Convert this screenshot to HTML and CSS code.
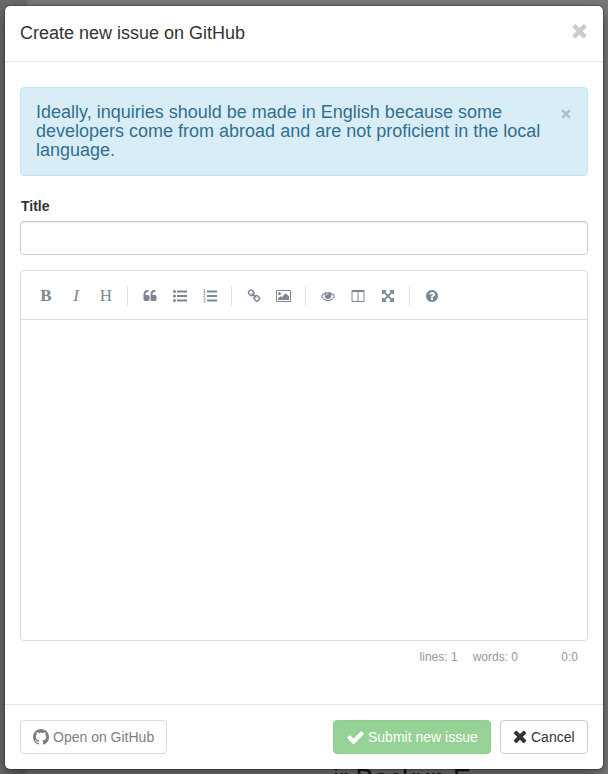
FILE: index.html
```
<!DOCTYPE html>
<html lang="en">
<head>
<meta charset="utf-8">
<title>Create new issue on GitHub</title>
<link rel="stylesheet" href="styles.css">
</head>
<body>
<svg class="defs" width="0" height="0">
<symbol id="times" viewBox="0 0 1792 1792"><path d="M1490 1322q0 40-28 68l-136 136q-28 28-68 28t-68-28l-294-294-294 294q-28 28-68 28t-68-28l-136-136q-28-28-28-68t28-68l294-294-294-294q-28-28-28-68t28-68l136-136q28-28 68-28t68 28l294 294 294-294q28-28 68-28t68 28l136 136q28 28 28 68t-28 68l-294 294 294 294q28 28 28 68z"/></symbol>
</svg>
<div class="backdrop"><span class="backdrop-text">ir Backup E</span></div>
<main class="modal">
<header class="modal-header">
<h1>Create new issue on GitHub</h1>
<button class="close" aria-label="Close"><svg><use href="#times"/></svg></button>
</header>
<section class="modal-body">
<div class="alert">
<p>Ideally, inquiries should be made in English because some developers come from abroad and are not proficient in the local language.</p>
<button class="dismiss" aria-label="Dismiss"><svg viewBox="0 0 10 10"><path d="M1.100 1.100l7.800 7.800M8.900 1.100L1.100 8.900"/></svg></button>
</div>
<label for="title">Title</label>
<input id="title" type="text">
<div class="editor">
<div class="toolbar">
<span class="tool letter bold">B</span><span class="tool letter italic">I</span><span class="tool letter">H</span>
<i class="separator"></i>
<span class="tool"><svg viewBox="0 0 1792 1792"><path d="M832 960v384q0 80-56 136t-136 56h-384q-80 0-136-56t-56-136v-704q0-104 40.5-198.5t109.5-163.5 163.5-109.5 198.5-40.5h64q26 0 45 19t19 45v128q0 26-19 45t-45 19h-64q-106 0-181 75t-75 181v32q0 40 28 68t68 28h224q80 0 136 56t56 136zm896 0v384q0 80-56 136t-136 56h-384q-80 0-136-56t-56-136v-704q0-104 40.5-198.5t109.5-163.5 163.5-109.5 198.5-40.5h64q26 0 45 19t19 45v128q0 26-19 45t-45 19h-64q-106 0-181 75t-75 181v32q0 40 28 68t68 28h224q80 0 136 56t56 136z"/></svg></span>
<span class="tool"><svg viewBox="0 0 14 14"><circle cx="1.5" cy="2.5" r="1.5"/><circle cx="1.5" cy="7" r="1.5"/><circle cx="1.5" cy="11.5" r="1.5"/><path d="M4 1.5h10v2H4zM4 6h10v2H4zM4 10.500h10v2H4z"/></svg></span>
<span class="tool"><svg viewBox="0 0 14 14"><path d="M4 1.500h10v2H4zM4 6h10v2H4zM4 10.500h10v2H4z"/><path class="line" d="M.5 1L1.500.5V3.500M.4 3.600H2.600M.4 5.500Q2.400 4.500 2.200 6L.5 8.100H2.700M.4 10H2.400L1.400 11.500Q3 11.800 2.200 13Q1.300 13.900.3 13.200"/></svg></span>
<i class="separator"></i>
<span class="tool"><svg viewBox="0 0 1792 1792"><path d="M1520 1216q0-40-28-68l-208-208q-28-28-68-28-42 0-72 32 3 3 19 18.500t21.500 21.500 15 19 13 25.500 3.500 27.500q0 40-28 68t-68 28q-15 0-27.500-3.500t-25.500-13-19-15-21.500-21.500-18.500-19q-33 31-33 73 0 40 28 68l206 207q27 27 68 27 40 0 68-26l147-146q28-28 28-67zm-703-705q0-40-28-68l-206-207q-28-28-68-28-39 0-68 27l-147 146q-28 28-28 67 0 40 28 68l208 208q27 27 68 27 42 0 72-31-3-3-19-18.500t-21.500-21.500-15-19-13-25.500-3.500-27.500q0-40 28-68t68-28q15 0 27.500 3.500t25.500 13 19 15 21.500 21.500 18.500 19q33-31 33-73zm895 705q0 120-85 203l-147 146q-83 83-203 83-121 0-204-85l-206-207q-83-83-83-203 0-123 88-209l-88-88q-86 88-208 88-120 0-204-84l-208-208q-84-84-84-204t85-203l147-146q83-83 203-83 121 0 204 85l206 207q83 83 83 203 0 123-88 209l88 88q86-88 208-88 120 0 204 84l208 208q84 84 84 204z"/></svg></span>
<span class="tool"><svg class="wide" viewBox="0 0 15 14"><path fill-rule="evenodd" d="M1.250 1h12.500Q15 1 15 2.250v9.500Q15 13 13.750 13H1.250Q0 13 0 11.750v-9.500Q0 1 1.250 1zM1 2v10h13V2z"/><circle cx="3.500" cy="4.500" r="1.500"/><path d="M2 11V9.500L4.500 7l1.200 1.300L9.700 4.300 13 7.500V11z"/></svg></span>
<i class="separator"></i>
<span class="tool"><svg viewBox="0 0 1792 1792"><path d="M1664 960q-152-236-381-353 61 104 61 225 0 185-131.500 316.500t-316.500 131.500-316.500-131.500-131.500-316.500q0-121 61-225-229 117-381 353 133 205 333.500 326.500t434.500 121.500 434.500-121.500 333.500-326.500zm-720-384q0-20-14-34t-34-14q-125 0-214.500 89.500t-89.500 214.500q0 20 14 34t34 14 34-14 14-34q0-86 61-147t147-61q20 0 34-14t14-34zm848 384q0 34-20 69-140 230-376.500 368.500t-499.500 138.500-499.500-139-376.500-368q-20-35-20-69t20-69q140-229 376.500-368t499.500-139 499.500 139 376.500 368q20 35 20 69z"/></svg></span>
<span class="tool"><svg viewBox="0 0 1792 1792"><path d="M224 1536h608v-1152h-640v1120q0 13 9.500 22.500t22.500 9.500zm1376-32v-1120h-640v1152h608q13 0 22.500-9.500t9.500-22.500zm128-1216v1216q0 66-47 113t-113 47h-1344q-66 0-113-47t-47-113v-1216q0-66 47-113t113-47h1344q66 0 113 47t47 113z"/></svg></span>
<span class="tool"><svg viewBox="0 0 1792 1792"><path d="M1411 541l-355 355 355 355 144-144q29-31 70-14 39 17 39 59v448q0 26-19 45t-45 19h-448q-42 0-59-40-17-39 14-69l144-144-355-355-355 355 144 144q31 30 14 69-17 40-59 40h-448q-26 0-45-19t-19-45v-448q0-42 40-59 39-17 69 14l144 144 355-355-355-355-144 144q-19 19-45 19-12 0-24-5-40-17-40-59v-448q0-26 19-45t45-19h448q42 0 59 40 17 39-14 69l-144 144 355 355 355-355-144-144q-31-30-14-69 17-40 59-40h448q26 0 45 19t19 45v448q0 42-39 59-13 5-25 5-26 0-45-19z"/></svg></span>
<i class="separator"></i>
<span class="tool"><svg viewBox="0 0 1792 1792"><path d="M1024 1376v-192q0-14-9-23t-23-9h-192q-14 0-23 9t-9 23v192q0 14 9 23t23 9h192q14 0 23-9t9-23zm256-672q0-88-55.500-163t-138.500-116-170-41q-243 0-371 213-15 24 8 42l132 100q7 6 19 6 16 0 25-12 53-68 86-92 34-24 86-24 48 0 85.500 26t37.500 59q0 38-20 61t-68 45q-63 28-115.500 86.500t-52.500 125.500v36q0 14 9 23t23 9h192q14 0 23-9t9-23q0-19 21.500-49.500t54.500-49.500q32-18 49-28.500t46-35 44.500-48 28-60.500 12.500-81zm384 192q0 209-103 385.500t-279.500 279.500-385.500 103-385.500-103-279.500-279.500-103-385.500 103-385.500 279.500-279.500 385.500-103 385.500 103 279.500 279.500 103 385.500z"/></svg></span>
</div>
<div class="writing-area"></div>
</div>
<div class="status"><span>lines: 1</span><span>words: 0</span><span class="cursor">0:0</span></div>
</section>
<footer class="modal-footer">
<button class="btn open"><svg viewBox="0 0 16 16"><path d="M8 0C3.580 0 0 3.580 0 8c0 3.540 2.290 6.530 5.470 7.590.4.070.55-.17.55-.38 0-.19-.01-.82-.01-1.490-2.010.37-2.530-.49-2.690-.94-.09-.23-.48-.94-.82-1.130-.28-.15-.68-.52-.01-.53.63-.01 1.080.58 1.230.82.72 1.210 1.870.87 2.330.66.07-.52.28-.87.51-1.070-1.780-.2-3.640-.89-3.640-3.950 0-.87.31-1.590.82-2.150-.08-.2-.36-1.020.08-2.120 0 0 .67-.21 2.200.82.64-.18 1.320-.27 2-.27s1.360.09 2 .27c1.530-1.040 2.200-.82 2.200-.82.44 1.100.16 1.920.08 2.120.51.56.82 1.270.82 2.150 0 3.070-1.870 3.750-3.650 3.950.29.25.54.73.54 1.480 0 1.070-.01 1.930-.01 2.200 0 .21.15.46.55.38A8.010 8.010 0 0 0 16 8c0-4.420-3.580-8-8-8z"/></svg><span>Open on GitHub</span></button>
<button class="btn submit"><svg viewBox="0 0 1792 1792"><path d="M1671 566q0 40-28 68l-724 724-136 136q-28 28-68 28t-68-28l-136-136-362-362q-28-28-28-68t28-68l136-136q28-28 68-28t68 28l294 295 656-657q28-28 68-28t68 28l136 136q28 28 28 68z"/></svg><span>Submit new issue</span></button>
<button class="btn cancel"><svg viewBox="220 128 1350 1792"><use href="#times" width="1792" height="1792"/></svg><span>Cancel</span></button>
</footer>
</main>
</body>
</html>
```
FILE: styles.css
```
* { box-sizing: border-box; }
body {
  margin: 0;
  height: 774px;
  overflow: hidden;
  padding: 6px 5px 5px;
  background: #6b6b6b;
  font: 14px/20px "Liberation Sans", Arial, sans-serif;
  color: #333;
}
button { font: inherit; cursor: pointer; }
svg { fill: currentColor; flex: none; }
.defs { position: absolute; }
.backdrop {
  position: absolute;
  inset: 0;
  overflow: hidden;
  background: linear-gradient(90deg, #6c6c6c 27px, #7b7b7b 27px);
}
.backdrop-text {
  position: absolute;
  left: 333px;
  top: 764px;
  font-size: 27px;
  line-height: 30px;
  color: #151515;
  white-space: nowrap;
}
.modal {
  position: relative;
  display: flex;
  flex-direction: column;
  width: 598px;
  height: 763px;
  background: #fff;
  border-radius: 5px;
  box-shadow: 0 0 0 1px rgba(0,0,0,.2), 0 5px 15px rgba(0,0,0,.5);
}
.modal-header {
  display: flex;
  justify-content: space-between;
  height: 56px;
  padding: 15px;
  border-bottom: 1px solid #e5e5e5;
}
.modal-header h1 { margin: 0; font-size: 18px; line-height: 25px; font-weight: 400; }
.close, .dismiss { display: block; padding: 0; border: 0; background: none; }
.close { height: 21px; margin-right: -2px; color: #ccc; }
.close svg { display: block; width: 21px; height: 21px; margin-top: -3px; }
.modal-body { flex: 1; padding: 25px 15px 0; }
.alert {
  display: flex;
  justify-content: space-between;
  height: 89px;
  padding: 15px;
  border: 1px solid #bce8f1;
  border-radius: 4px;
  background: #d9edf7;
  color: #31708f;
}
.alert p { margin: 0; width: 510px; font-size: 18px; line-height: 19px; }
.dismiss { height: 10px; margin: 6px 1px 0 0; color: #aebec6; }
.dismiss svg { display: block; width: 10px; height: 10px; stroke: currentColor; stroke-width: 2.3; }
label { display: block; margin: 20px 0 5px 1px; font-weight: 700; line-height: 20px; }
input {
  display: block;
  width: 100%;
  height: 34px;
  border: 1px solid #ccc;
  border-radius: 4px;
  box-shadow: inset 0 1px 1px rgba(0,0,0,.075);
}
.editor { height: 371px; margin-top: 15px; border: 1px solid #ddd; border-radius: 4px; }
.toolbar {
  display: flex;
  align-items: center;
  height: 49px;
  padding: 1px 10px 0;
  border-bottom: 1px solid #ddd;
  color: #7b8894;
}
.tool { display: flex; align-items: center; justify-content: center; width: 30px; height: 30px; }
.tool svg { width: 14px; height: 14px; }
.tool .wide { width: 15px; margin-right: 1px; }
.line { fill: none; stroke: currentColor; stroke-width: .7; }
.letter { font: 17px/30px "Liberation Serif", serif; }
.bold { font-weight: 700; }
.italic { font-style: italic; }
.separator { width: 2px; height: 20px; margin: 0 6px; border-left: 1px solid #e0e0e0; }
.status { display: flex; justify-content: flex-end; padding: 6px 10px; color: #959694; font-size: 12px; }
.status span { margin-left: 15px; }
.status .cursor { min-width: 45px; text-align: right; }
.modal-footer { display: flex; height: 65px; padding: 15px; border-top: 1px solid #e5e5e5; }
.btn {
  display: flex;
  align-items: center;
  gap: 4px;
  height: 34px;
  padding: 0 12px;
  border: 1px solid #ccc;
  border-radius: 4px;
  background: #fff;
  color: #333;
  white-space: nowrap;
}
.btn svg { width: 16px; height: 16px; }
.btn.open { width: 147px; margin-right: auto; border-color: #dbdbdb; color: #808080; }
.btn.submit { width: 158px; border-color: #8fce8f; background: #96d296; color: #fff; gap: 3px; }
.btn.submit svg { width: 19px; height: 19px; }
.btn.cancel { width: 88px; margin-left: 9px; }
.btn.cancel svg { width: 14px; height: 19px; }
```
